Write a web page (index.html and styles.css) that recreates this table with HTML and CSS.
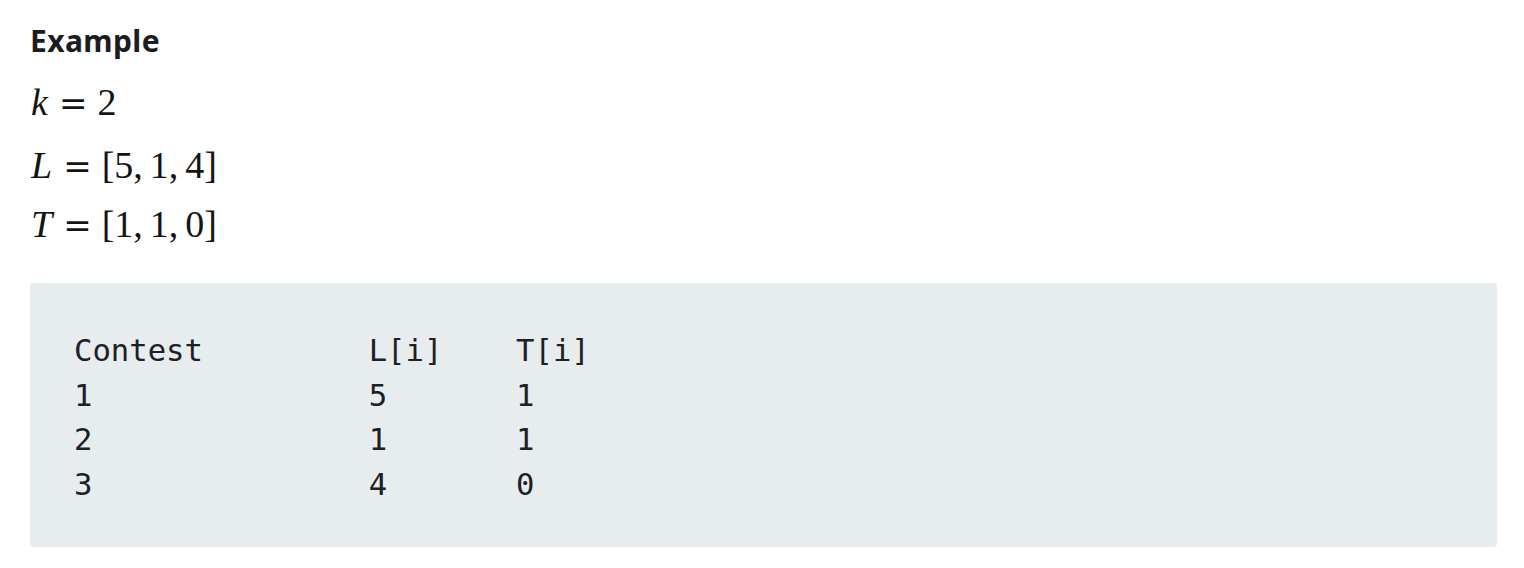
FILE: index.html
```html
<!DOCTYPE html>
<html>
<head>
<meta charset="utf-8">
<link rel="stylesheet" href="styles.css">
</head>
<body>
<main class="page">
  <h2 class="title">Example</h2>
  <div class="math first"><span class="mi">k</span><span class="mo">=</span><span class="mn">2</span></div>
  <div class="math"><span class="mi">L</span><span class="mo">=</span><span class="mn">[5<span class="punct">,</span>1<span class="punct">,</span>4]</span></div>
  <div class="math"><span class="mi">T</span><span class="mo">=</span><span class="mn">[1<span class="punct">,</span>1<span class="punct">,</span>0]</span></div>
  <pre class="code">Contest         L[i]    T[i]
1               5       1
2               1       1
3               4       0</pre>
</main>
</body>
</html>
```
FILE: styles.css
```css
html, body {
  margin: 0;
  padding: 0;
  background: #ffffff;
}
.page {
  padding: 21px 27px 0 30px;
}
.title {
  margin: 0;
  font-family: "Noto Sans", "Open Sans", sans-serif;
  font-weight: 700;
  font-size: 30px;
  letter-spacing: 0.4px;
  line-height: 40px;
  color: #1b1c24;
  height: 40px;
}
.math {
  margin: 11.5px 0 0 0;
  font-family: "Liberation Serif", serif;
  font-size: 38px;
  line-height: 59px;
  height: 59px;
  color: #141414;
  white-space: nowrap;
}
.math + .math {
  margin-top: 0;
}
.math.first {
  margin-bottom: 4px;
}
.math.first + .math {
  margin-top: 0;
}
.mi {
  font-style: italic;
  display: inline-block;
  margin-left: 1px;
}
.mo {
  display: inline-block;
  font-family: "DejaVu Serif", serif;
  font-size: 34px;
  margin: 0 10px 0 11px;
}
.punct {
  margin-right: 7px;
}
.code {
  margin: 29.5px 0 0 0;
  padding: 46px 44px 40px 44px;
  background: #e7ecee;
  border-radius: 4px;
  font-family: "DejaVu Sans Mono", monospace;
  font-size: 30.6px;
  line-height: 44.5px;
  color: #1d2024;
}
```
